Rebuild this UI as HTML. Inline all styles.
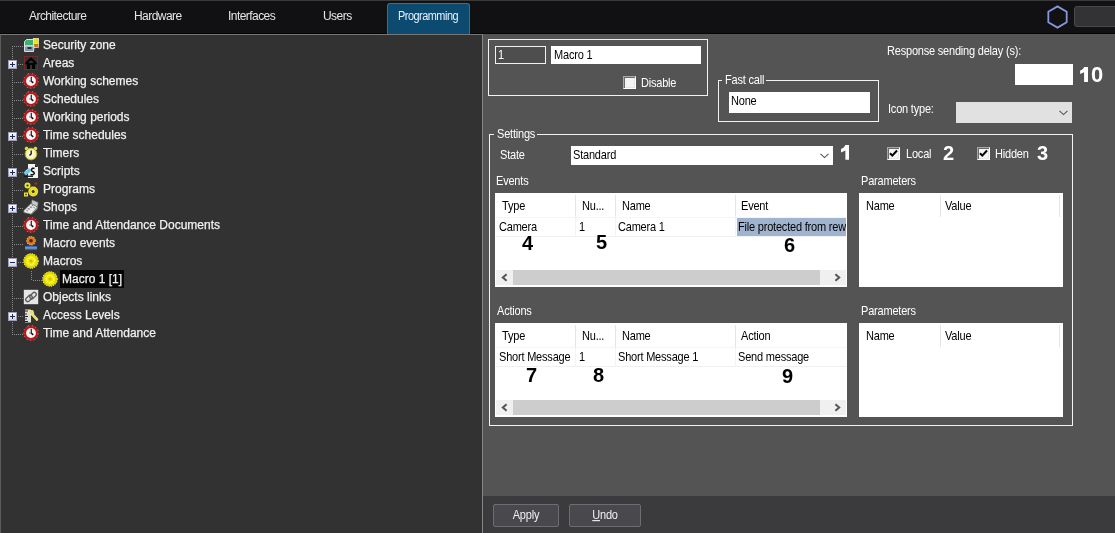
<!DOCTYPE html>
<html><head><meta charset="utf-8"><style>
*{margin:0;padding:0;box-sizing:border-box}
html,body{width:1115px;height:533px;overflow:hidden;background:#545454;font-family:"Liberation Sans",sans-serif;-webkit-font-smoothing:antialiased}
.a{position:absolute}
.t{position:absolute;white-space:nowrap;font-size:11px;line-height:13px;color:#fff;letter-spacing:-0.2px;transform:scaleY(1.1);transform-origin:0 10.3px}
.k{color:#000}
.tab{position:absolute;top:9px;font-size:12px;line-height:14px;color:#e6e6e6;letter-spacing:-0.55px;white-space:nowrap}
.tr{position:absolute;font-size:12px;line-height:18px;height:18px;color:#f0f0f0;white-space:nowrap;-webkit-text-stroke:0.25px #f0f0f0}
.num{position:absolute;font-size:20px;line-height:20px;font-weight:bold;white-space:nowrap}
.grp{position:absolute;border:1px solid #f2f2f2}
.gt{position:absolute;background:#545454;padding:0 2px;font-size:11px;line-height:13px;color:#fff;white-space:nowrap}
.fld{position:absolute;background:#fff}
.lv{position:absolute;background:#fff;overflow:hidden}
.chk{position:absolute;width:13px;height:13px;background:#f4f4f4;border:1px solid #a8a8a8;border-right-color:#fff;border-bottom-color:#fff;box-shadow:inset 1px 1px 0 #6c6c6c,inset -1px -1px 0 #e6e6e6}
svg{position:absolute;overflow:visible}
</style></head><body><div id="root" style="position:absolute;left:0;top:0;width:1115px;height:533px;will-change:transform">
<div class="a" style="left:0px;top:0px;width:1115px;height:34px;background:#111113;"></div>
<div class="a" style="left:0px;top:0px;width:1115px;height:1px;background:#3a3a3a;"></div>
<div class="a" style="left:0px;top:33px;width:1115px;height:1px;background:#050505;"></div>
<div class="tab" style="left:29px;top:9px;">Architecture</div>
<div class="tab" style="left:134px;top:9px;">Hardware</div>
<div class="tab" style="left:228px;top:9px;">Interfaces</div>
<div class="tab" style="left:323px;top:9px;">Users</div>
<div class="a" style="left:387px;top:3px;width:83px;height:32px;background:#0d4a70;border:1px solid #3b6f92;border-bottom:none;border-radius:3px 3px 0 0"></div>
<div class="tab" style="left:398px;top:9px;color:#e4f2ff;transform:scaleX(0.91);transform-origin:0 0">Programming</div>
<svg style="left:1045px;top:4px" width="26" height="27" viewBox="0 0 26 27"><polygon points="12.50,2.40 21.68,7.70 21.68,18.30 12.50,23.60 3.32,18.30 3.32,7.70" fill="none" stroke="#8597d8" stroke-width="1.8"/></svg>
<div class="a" style="left:1074px;top:6px;width:60px;height:21px;background:#333335;border:1px solid #4a4a4c;border-radius:3px"></div>
<div class="a" style="left:0px;top:34px;width:483px;height:499px;background:#323232;border-top:1px solid #777;border-left:1px solid #5c5c5c;border-right:1px solid #868686"></div>
<div class="a" style="left:12px;top:46px;width:1px;height:289px;background:repeating-linear-gradient(to bottom,#8c8c8c 0 1px,transparent 1px 2px)"></div>
<div class="a" style="left:13px;top:46px;width:10px;height:1px;background:repeating-linear-gradient(to right,transparent 0 1px,#8c8c8c 1px 2px)"></div>
<svg style="left:23px;top:37px" width="16" height="16" viewBox="0 0 16 16"><path d="M1.5 4.5L3.5 2.5H10.5V9H1.5Z" fill="#3cb070" stroke="#eaf6ea" stroke-width="0.9"/><rect x="10.5" y="1.5" width="5" height="5" fill="#ece020" stroke="#f8f4d0" stroke-width="0.7"/><rect x="10.5" y="6.5" width="5" height="4" fill="#c07c10" stroke="#f8e8c8" stroke-width="0.7"/><path d="M1.5 9H11L10.5 14.5H1.5Z" fill="#8a96aa" stroke="#e8ecf4" stroke-width="0.9"/><rect x="4.5" y="10" width="4" height="2" fill="#2a323c"/></svg>
<div class="tr" style="left:43px;top:36px">Security zone</div>
<div class="a" style="left:13px;top:64px;width:10px;height:1px;background:repeating-linear-gradient(to right,transparent 0 1px,#8c8c8c 1px 2px)"></div>
<svg style="left:23px;top:55px" width="16" height="16" viewBox="0 0 16 16"><rect x="1.5" y="1.5" width="13" height="13" fill="none" stroke="#c02020" stroke-width="1" stroke-dasharray="1 1"/><path d="M2.5 9L8 3.5L13.5 9" stroke="#000" stroke-width="2" fill="none"/><rect x="4" y="8" width="8" height="6" fill="#000"/><rect x="7" y="10" width="2" height="4" fill="#333"/></svg>
<div class="a" style="left:8px;top:60px;width:9px;height:9px;background:linear-gradient(#fafafa,#d8d8d8);border:1px solid #a0a0b0"></div>
<svg style="left:8px;top:60px" width="9" height="9" viewBox="0 0 9 9"><path d="M2 4.5H7" stroke="#1a2a5a" stroke-width="1"/><path d="M4.5 2V7" stroke="#1a2a5a" stroke-width="1"/></svg>
<div class="tr" style="left:43px;top:54px">Areas</div>
<div class="a" style="left:13px;top:82px;width:10px;height:1px;background:repeating-linear-gradient(to right,transparent 0 1px,#8c8c8c 1px 2px)"></div>
<svg style="left:23px;top:73px" width="16" height="16" viewBox="0 0 16 16"><path d="M5 0.8H11L15.2 5V11L11 15.2H5L0.8 11V5Z" fill="#b81818"/><path d="M5 0.8H11L15.2 5V11L11 15.2H5L0.8 11V5Z" fill="none" stroke="#f0b0a8" stroke-width="0.6" stroke-dasharray="1.2 2.6"/><circle cx="8" cy="8" r="4.9" fill="#fbf4f4"/><path d="M8.3 3.8V8.2" stroke="#3a2060" stroke-width="1.3"/><path d="M8.2 8.2L10.3 9.8" stroke="#111" stroke-width="1.5"/><path d="M6 8H8" stroke="#777" stroke-width="1"/></svg>
<div class="tr" style="left:43px;top:72px">Working schemes</div>
<div class="a" style="left:13px;top:100px;width:10px;height:1px;background:repeating-linear-gradient(to right,transparent 0 1px,#8c8c8c 1px 2px)"></div>
<svg style="left:23px;top:91px" width="16" height="16" viewBox="0 0 16 16"><path d="M5 0.8H11L15.2 5V11L11 15.2H5L0.8 11V5Z" fill="#b81818"/><path d="M5 0.8H11L15.2 5V11L11 15.2H5L0.8 11V5Z" fill="none" stroke="#f0b0a8" stroke-width="0.6" stroke-dasharray="1.2 2.6"/><circle cx="8" cy="8" r="4.9" fill="#fbf4f4"/><path d="M8.3 3.8V8.2" stroke="#3a2060" stroke-width="1.3"/><path d="M8.2 8.2L10.3 9.8" stroke="#111" stroke-width="1.5"/><path d="M6 8H8" stroke="#777" stroke-width="1"/></svg>
<div class="tr" style="left:43px;top:90px">Schedules</div>
<div class="a" style="left:13px;top:118px;width:10px;height:1px;background:repeating-linear-gradient(to right,transparent 0 1px,#8c8c8c 1px 2px)"></div>
<svg style="left:23px;top:109px" width="16" height="16" viewBox="0 0 16 16"><path d="M5 0.8H11L15.2 5V11L11 15.2H5L0.8 11V5Z" fill="#b81818"/><path d="M5 0.8H11L15.2 5V11L11 15.2H5L0.8 11V5Z" fill="none" stroke="#f0b0a8" stroke-width="0.6" stroke-dasharray="1.2 2.6"/><circle cx="8" cy="8" r="4.9" fill="#fbf4f4"/><path d="M8.3 3.8V8.2" stroke="#3a2060" stroke-width="1.3"/><path d="M8.2 8.2L10.3 9.8" stroke="#111" stroke-width="1.5"/><path d="M6 8H8" stroke="#777" stroke-width="1"/></svg>
<div class="tr" style="left:43px;top:108px">Working periods</div>
<div class="a" style="left:13px;top:136px;width:10px;height:1px;background:repeating-linear-gradient(to right,transparent 0 1px,#8c8c8c 1px 2px)"></div>
<svg style="left:23px;top:127px" width="16" height="16" viewBox="0 0 16 16"><path d="M5 0.8H11L15.2 5V11L11 15.2H5L0.8 11V5Z" fill="#b81818"/><path d="M5 0.8H11L15.2 5V11L11 15.2H5L0.8 11V5Z" fill="none" stroke="#f0b0a8" stroke-width="0.6" stroke-dasharray="1.2 2.6"/><circle cx="8" cy="8" r="4.9" fill="#fbf4f4"/><path d="M8.3 3.8V8.2" stroke="#3a2060" stroke-width="1.3"/><path d="M8.2 8.2L10.3 9.8" stroke="#111" stroke-width="1.5"/><path d="M6 8H8" stroke="#777" stroke-width="1"/></svg>
<div class="a" style="left:8px;top:132px;width:9px;height:9px;background:linear-gradient(#fafafa,#d8d8d8);border:1px solid #a0a0b0"></div>
<svg style="left:8px;top:132px" width="9" height="9" viewBox="0 0 9 9"><path d="M2 4.5H7" stroke="#1a2a5a" stroke-width="1"/><path d="M4.5 2V7" stroke="#1a2a5a" stroke-width="1"/></svg>
<div class="tr" style="left:43px;top:126px">Time schedules</div>
<div class="a" style="left:13px;top:154px;width:10px;height:1px;background:repeating-linear-gradient(to right,transparent 0 1px,#8c8c8c 1px 2px)"></div>
<svg style="left:23px;top:145px" width="16" height="16" viewBox="0 0 16 16"><circle cx="3.6" cy="3.6" r="2.3" fill="#e2dc50" stroke="#222" stroke-width="0.8"/><circle cx="12.4" cy="3.6" r="2.3" fill="#e2dc50" stroke="#222" stroke-width="0.8"/><circle cx="8" cy="9" r="5.9" fill="#f2f09a" stroke="#b0a830" stroke-width="0.9"/><circle cx="8" cy="9" r="3.8" fill="#fafad0"/><path d="M8.2 5.5V9L6.4 10.6" stroke="#111" stroke-width="1.3" fill="none"/></svg>
<div class="tr" style="left:43px;top:144px">Timers</div>
<div class="a" style="left:13px;top:172px;width:10px;height:1px;background:repeating-linear-gradient(to right,transparent 0 1px,#8c8c8c 1px 2px)"></div>
<svg style="left:23px;top:163px" width="16" height="16" viewBox="0 0 16 16"><path d="M5 1H12L15 4V15H5Z" fill="#f2f2f2"/><path d="M12 1V4H15Z" fill="#1a1a1a"/><path d="M0.5 10L6 5L8.5 7.5L3 12.5Z" fill="#6cc8ec"/><path d="M1.5 9L5.5 5.5" stroke="#d8f4ff" stroke-width="0.8"/><path d="M1 13.3H10" stroke="#1a1a1a" stroke-width="1.3"/><path d="M11.5 5.5C8.5 4 7.5 8 10 8.8C12.5 9.6 11 12.5 7.5 11.5" stroke="#111" stroke-width="1.5" fill="none"/></svg>
<div class="a" style="left:8px;top:168px;width:9px;height:9px;background:linear-gradient(#fafafa,#d8d8d8);border:1px solid #a0a0b0"></div>
<svg style="left:8px;top:168px" width="9" height="9" viewBox="0 0 9 9"><path d="M2 4.5H7" stroke="#1a2a5a" stroke-width="1"/><path d="M4.5 2V7" stroke="#1a2a5a" stroke-width="1"/></svg>
<div class="tr" style="left:43px;top:162px">Scripts</div>
<div class="a" style="left:13px;top:190px;width:10px;height:1px;background:repeating-linear-gradient(to right,transparent 0 1px,#8c8c8c 1px 2px)"></div>
<svg style="left:23px;top:181px" width="16" height="16" viewBox="0 0 16 16"><circle cx="4.5" cy="4.5" r="3" fill="#f0e430"/><circle cx="4.5" cy="4.5" r="1.1" fill="#3a3000"/><circle cx="10.2" cy="10.5" r="4.9" fill="#f0e430"/><circle cx="10.2" cy="10.5" r="3.3" fill="none" stroke="#d8cc10" stroke-width="0.8"/><circle cx="10.2" cy="10.5" r="1.5" fill="#3a3000"/><rect x="1" y="11.5" width="4" height="4" fill="#f0e430"/><rect x="2.3" y="12.8" width="1.4" height="1.4" fill="#3a3000"/><circle cx="12.8" cy="2.5" r="1.3" fill="#c82020"/></svg>
<div class="tr" style="left:43px;top:180px">Programs</div>
<div class="a" style="left:13px;top:208px;width:10px;height:1px;background:repeating-linear-gradient(to right,transparent 0 1px,#8c8c8c 1px 2px)"></div>
<svg style="left:23px;top:199px" width="16" height="16" viewBox="0 0 16 16"><path d="M9 0.8L15.2 3.5L14.5 8L8.5 5Z" fill="#c8c8c8" stroke="#707070" stroke-width="0.6"/><path d="M0.8 11.5L8 4.5L14.5 8L8 15.2L0.8 13.5Z" fill="#ececec" stroke="#666" stroke-width="0.7"/><path d="M8 15.2L14.5 8V10L8.5 15.5Z" fill="#999"/><path d="M4.6 9.6L6.2 10.4M6.6 7.8L8.2 8.6M8.6 6.2L10.2 7M3.4 11.3L5 12.1M5.5 9.5L7.1 10.3M7.5 7.7L9.1 8.5M10.3 8.2L11.9 9" stroke="#808080" stroke-width="1"/></svg>
<div class="a" style="left:8px;top:204px;width:9px;height:9px;background:linear-gradient(#fafafa,#d8d8d8);border:1px solid #a0a0b0"></div>
<svg style="left:8px;top:204px" width="9" height="9" viewBox="0 0 9 9"><path d="M2 4.5H7" stroke="#1a2a5a" stroke-width="1"/><path d="M4.5 2V7" stroke="#1a2a5a" stroke-width="1"/></svg>
<div class="tr" style="left:43px;top:198px">Shops</div>
<div class="a" style="left:13px;top:226px;width:10px;height:1px;background:repeating-linear-gradient(to right,transparent 0 1px,#8c8c8c 1px 2px)"></div>
<svg style="left:23px;top:217px" width="16" height="16" viewBox="0 0 16 16"><path d="M5 0.8H11L15.2 5V11L11 15.2H5L0.8 11V5Z" fill="#b81818"/><path d="M5 0.8H11L15.2 5V11L11 15.2H5L0.8 11V5Z" fill="none" stroke="#f0b0a8" stroke-width="0.6" stroke-dasharray="1.2 2.6"/><circle cx="8" cy="8" r="4.9" fill="#fbf4f4"/><path d="M8.3 3.8V8.2" stroke="#3a2060" stroke-width="1.3"/><path d="M8.2 8.2L10.3 9.8" stroke="#111" stroke-width="1.5"/><path d="M6 8H8" stroke="#777" stroke-width="1"/></svg>
<div class="tr" style="left:43px;top:216px">Time and Attendance Documents</div>
<div class="a" style="left:13px;top:244px;width:10px;height:1px;background:repeating-linear-gradient(to right,transparent 0 1px,#8c8c8c 1px 2px)"></div>
<svg style="left:23px;top:235px" width="16" height="16" viewBox="0 0 16 16"><circle cx="8" cy="5.8" r="4.2" fill="#e07818" stroke="#f0a040" stroke-width="1.3" stroke-dasharray="1.4 1"/><circle cx="8" cy="5.8" r="1.8" fill="#4a2800"/><rect x="2" y="11" width="12" height="1.6" fill="#2f6cc8"/><rect x="2" y="12.6" width="12" height="1" fill="#e8f0ff"/><rect x="2" y="13.6" width="12" height="1.6" fill="#2a5cb0"/></svg>
<div class="tr" style="left:43px;top:234px">Macro events</div>
<div class="a" style="left:13px;top:262px;width:10px;height:1px;background:repeating-linear-gradient(to right,transparent 0 1px,#8c8c8c 1px 2px)"></div>
<svg style="left:23px;top:253px" width="16" height="16" viewBox="0 0 16 16"><circle cx="8" cy="8" r="7.2" fill="#d8d000" stroke="#f0ea30" stroke-width="1.2" stroke-dasharray="1.3 1"/><circle cx="8" cy="8" r="5.6" fill="#f2ea00"/><circle cx="8" cy="8" r="3.6" fill="none" stroke="#fffde0" stroke-width="0.9" stroke-dasharray="1 0.9"/><circle cx="8" cy="8" r="1.6" fill="#c8c000"/></svg>
<div class="a" style="left:8px;top:258px;width:9px;height:9px;background:linear-gradient(#fafafa,#d8d8d8);border:1px solid #a0a0b0"></div>
<svg style="left:8px;top:258px" width="9" height="9" viewBox="0 0 9 9"><path d="M2 4.5H7" stroke="#1a2a5a" stroke-width="1"/></svg>
<div class="tr" style="left:43px;top:252px">Macros</div>
<div class="a" style="left:31px;top:271px;width:1px;height:9px;background:repeating-linear-gradient(to bottom,#8c8c8c 0 1px,transparent 1px 2px)"></div>
<div class="a" style="left:32px;top:280px;width:10px;height:1px;background:repeating-linear-gradient(to right,transparent 0 1px,#8c8c8c 1px 2px)"></div>
<div class="a" style="left:60px;top:270px;width:64px;height:18px;background:#050505;"></div>
<svg style="left:42px;top:271px" width="16" height="16" viewBox="0 0 16 16"><circle cx="8" cy="8" r="7.2" fill="#d8d000" stroke="#f0ea30" stroke-width="1.2" stroke-dasharray="1.3 1"/><circle cx="8" cy="8" r="5.6" fill="#f2ea00"/><circle cx="8" cy="8" r="3.6" fill="none" stroke="#fffde0" stroke-width="0.9" stroke-dasharray="1 0.9"/><circle cx="8" cy="8" r="1.6" fill="#c8c000"/></svg>
<div class="tr" style="left:62px;top:270px">Macro 1 [1]</div>
<div class="a" style="left:13px;top:298px;width:10px;height:1px;background:repeating-linear-gradient(to right,transparent 0 1px,#8c8c8c 1px 2px)"></div>
<svg style="left:23px;top:289px" width="16" height="16" viewBox="0 0 16 16"><rect x="0.8" y="0.8" width="14.4" height="14.4" fill="#e6e6e6"/><rect x="2.2" y="7.3" width="7.5" height="4" rx="2" transform="rotate(-45 6 9.3)" fill="none" stroke="#606060" stroke-width="1.4"/><rect x="6.3" y="4.7" width="7.5" height="4" rx="2" transform="rotate(-45 10 6.7)" fill="none" stroke="#606060" stroke-width="1.4"/></svg>
<div class="tr" style="left:43px;top:288px">Objects links</div>
<div class="a" style="left:13px;top:316px;width:10px;height:1px;background:repeating-linear-gradient(to right,transparent 0 1px,#8c8c8c 1px 2px)"></div>
<svg style="left:23px;top:307px" width="16" height="16" viewBox="0 0 16 16"><rect x="2" y="2.5" width="6" height="13" fill="#e0e0e0"/><path d="M2 4H5M2 7H4M2 9.5H5M2 12H4M2 14.5H5" stroke="#222" stroke-width="1"/><path d="M8.5 6.5L14 12.5" stroke="#e8e070" stroke-width="2.6" stroke-linecap="round"/><path d="M5 3.5H10L11 6.5L8 8Z" fill="#e8e070" stroke="#f8f4b0" stroke-width="0.6"/></svg>
<div class="a" style="left:8px;top:312px;width:9px;height:9px;background:linear-gradient(#fafafa,#d8d8d8);border:1px solid #a0a0b0"></div>
<svg style="left:8px;top:312px" width="9" height="9" viewBox="0 0 9 9"><path d="M2 4.5H7" stroke="#1a2a5a" stroke-width="1"/><path d="M4.5 2V7" stroke="#1a2a5a" stroke-width="1"/></svg>
<div class="tr" style="left:43px;top:306px">Access Levels</div>
<div class="a" style="left:13px;top:334px;width:10px;height:1px;background:repeating-linear-gradient(to right,transparent 0 1px,#8c8c8c 1px 2px)"></div>
<svg style="left:23px;top:325px" width="16" height="16" viewBox="0 0 16 16"><path d="M5 0.8H11L15.2 5V11L11 15.2H5L0.8 11V5Z" fill="#b81818"/><path d="M5 0.8H11L15.2 5V11L11 15.2H5L0.8 11V5Z" fill="none" stroke="#f0b0a8" stroke-width="0.6" stroke-dasharray="1.2 2.6"/><circle cx="8" cy="8" r="4.9" fill="#fbf4f4"/><path d="M8.3 3.8V8.2" stroke="#3a2060" stroke-width="1.3"/><path d="M8.2 8.2L10.3 9.8" stroke="#111" stroke-width="1.5"/><path d="M6 8H8" stroke="#777" stroke-width="1"/></svg>
<div class="tr" style="left:43px;top:324px">Time and Attendance</div>
<div class="a" style="left:483px;top:496px;width:632px;height:37px;background:#3b3a3c;"></div>
<div class="a" style="left:488px;top:39px;width:220px;height:57px;border:1px solid #f2f2f2"></div>
<div class="a" style="left:495px;top:46px;width:51px;height:18px;border:1px solid #f2f2f2"></div>
<div class="a" style="left:496px;top:47px;width:49px;height:16px;background:#4e4e4e;"></div>
<div class="t" style="left:498px;top:49px;color:#fff;">1</div>
<div class="a" style="left:551px;top:46px;width:150px;height:18px;background:#fff;"></div>
<div class="t" style="left:554px;top:49px;color:#000;">Macro 1</div>
<div class="chk" style="left:623px;top:76px"></div>
<div class="t" style="left:641px;top:77px;color:#fff;">Disable</div>
<div class="a" style="left:718px;top:80px;width:161px;height:42px;border:1px solid #f2f2f2"></div>
<div class="a" style="left:722px;top:74px;width:44px;height:12px;background:#545454;"></div>
<div class="t" style="left:725px;top:74px;color:#fff;">Fast call</div>
<div class="a" style="left:729px;top:92px;width:141px;height:21px;background:#fff;"></div>
<div class="t" style="left:731px;top:95px;color:#000;">None</div>
<div class="t" style="left:887px;top:45px;color:#fff;">Response sending delay (s):</div>
<div class="a" style="left:1015px;top:64px;width:58px;height:21px;background:#fff;"></div>
<svg style="left:1076px;top:60px" width="30" height="26" viewBox="1076 60 30 26"><path d="M1084.1 66.9H1088V82H1084.1V72.3L1080.1 74.1V70.6C1082.3 69.7 1083.5 68.5 1084.1 66.9Z" fill="#fff"/></svg>
<div class="num" style="left:1091px;top:64px;font-size:22px;line-height:22px;color:#fff">0</div>
<div class="t" style="left:888px;top:103px;color:#fff;">Icon type:</div>
<div class="a" style="left:956px;top:102px;width:116px;height:21px;background:#e1e1e1;"></div>
<svg style="left:1059px;top:110px" width="9" height="6" viewBox="0 0 9 6"><path d="M0.5 0.8L4.5 4.6L8.5 0.8" stroke="#555" stroke-width="1.1" fill="none"/></svg>
<div class="a" style="left:489px;top:134px;width:584px;height:292px;border:1px solid #f2f2f2"></div>
<div class="a" style="left:494px;top:128px;width:43px;height:12px;background:#545454;"></div>
<div class="t" style="left:497px;top:128px;color:#fff;">Settings</div>
<div class="t" style="left:500px;top:149px;color:#fff;">State</div>
<div class="a" style="left:571px;top:146px;width:262px;height:19px;background:#fff;"></div>
<div class="t" style="left:573px;top:149px;color:#000;">Standard</div>
<svg style="left:820px;top:153px" width="9" height="6" viewBox="0 0 9 6"><path d="M0.5 0.8L4.5 4.6L8.5 0.8" stroke="#555" stroke-width="1.1" fill="none"/></svg>
<svg style="left:836px;top:140px" width="20" height="24" viewBox="836 140 20 24"><path d="M845.4 145H849V159.8H845.4V150.6L841 152.4V149.1C843.2 148.2 844.7 146.8 845.4 145Z" fill="#fff"/></svg>
<div class="chk" style="left:887px;top:147px"></div>
<svg style="left:888px;top:148px" width="11" height="11" viewBox="0 0 11 11"><path d="M2 5.2L4.3 7.6L9 2.5" stroke="#000" stroke-width="2" fill="none"/></svg>
<div class="t" style="left:906px;top:148px;color:#fff;">Local</div>
<div class="num" style="left:943px;top:143px;color:#fff">2</div>
<div class="chk" style="left:977px;top:147px"></div>
<svg style="left:978px;top:148px" width="11" height="11" viewBox="0 0 11 11"><path d="M2 5.2L4.3 7.6L9 2.5" stroke="#000" stroke-width="2" fill="none"/></svg>
<div class="t" style="left:995px;top:148px;color:#fff;">Hidden</div>
<div class="num" style="left:1037px;top:143px;color:#fff">3</div>
<div class="t" style="left:496px;top:175px;color:#fff;">Events</div>
<div class="t" style="left:861px;top:175px;color:#fff;">Parameters</div>
<div class="a" style="left:495px;top:193px;width:352px;height:94px;background:#fff;"></div>
<div class="a" style="left:575px;top:195px;width:1px;height:22px;background:#e5e5e5;"></div>
<div class="a" style="left:615px;top:195px;width:1px;height:22px;background:#e5e5e5;"></div>
<div class="a" style="left:735px;top:195px;width:1px;height:22px;background:#e5e5e5;"></div>
<div class="t" style="left:502px;top:200px;color:#000;">Type</div>
<div class="t" style="left:582px;top:200px;color:#000;">Nu...</div>
<div class="t" style="left:622px;top:200px;color:#000;">Name</div>
<div class="t" style="left:741px;top:200px;color:#000;">Event</div>
<div class="a" style="left:496px;top:217px;width:350px;height:1px;background:#f5f5f5;"></div>
<div class="a" style="left:496px;top:236px;width:350px;height:1px;background:#f0f0f0;"></div>
<div class="a" style="left:575px;top:217px;width:1px;height:20px;background:#f3f3f3;"></div>
<div class="a" style="left:615px;top:217px;width:1px;height:20px;background:#f3f3f3;"></div>
<div class="a" style="left:735px;top:217px;width:1px;height:20px;background:#f3f3f3;"></div>
<div class="a" style="left:737px;top:218px;width:109px;height:18px;background:#a0b4d0;"></div>
<div class="a" style="left:499px;top:221px;width:347px;height:14px;overflow:hidden"><div class="t" style="left:0;top:0;color:#000">Camera</div></div>
<div class="a" style="left:579px;top:221px;width:267px;height:14px;overflow:hidden"><div class="t" style="left:0;top:0;color:#000">1</div></div>
<div class="a" style="left:618px;top:221px;width:228px;height:14px;overflow:hidden"><div class="t" style="left:0;top:0;color:#000">Camera 1</div></div>
<div class="a" style="left:738px;top:221px;width:108px;height:14px;overflow:hidden"><div class="t" style="left:0;top:0;color:#000">File protected from rew</div></div>
<div class="a" style="left:496px;top:270px;width:350px;height:15px;background:#f0f0f0;"></div>
<div class="a" style="left:513px;top:270px;width:307px;height:15px;background:#cdcdcd;"></div>
<svg style="left:500px;top:273px" width="9" height="9" viewBox="0 0 9 9"><path d="M6.6 1.2L2.8 4.5L6.6 7.8" stroke="#555" stroke-width="2" fill="none"/></svg>
<svg style="left:833px;top:273px" width="9" height="9" viewBox="0 0 9 9"><path d="M2.4 1.2L6.2 4.5L2.4 7.8" stroke="#555" stroke-width="2" fill="none"/></svg>
<div class="a" style="left:859px;top:193px;width:204px;height:94px;background:#fff;"></div>
<div class="a" style="left:940px;top:195px;width:1px;height:22px;background:#e5e5e5;"></div>
<div class="a" style="left:1059px;top:195px;width:1px;height:22px;background:#e5e5e5;"></div>
<div class="t" style="left:866px;top:200px;color:#000;">Name</div>
<div class="t" style="left:945px;top:200px;color:#000;">Value</div>
<div class="num" style="left:522px;top:233px;color:#000">4</div>
<div class="num" style="left:596px;top:232px;color:#000">5</div>
<div class="num" style="left:784px;top:235px;color:#000">6</div>
<div class="t" style="left:497px;top:305px;color:#fff;">Actions</div>
<div class="t" style="left:861px;top:305px;color:#fff;">Parameters</div>
<div class="a" style="left:495px;top:323px;width:352px;height:94px;background:#fff;"></div>
<div class="a" style="left:575px;top:325px;width:1px;height:22px;background:#e5e5e5;"></div>
<div class="a" style="left:615px;top:325px;width:1px;height:22px;background:#e5e5e5;"></div>
<div class="a" style="left:735px;top:325px;width:1px;height:22px;background:#e5e5e5;"></div>
<div class="t" style="left:502px;top:330px;color:#000;">Type</div>
<div class="t" style="left:582px;top:330px;color:#000;">Nu...</div>
<div class="t" style="left:622px;top:330px;color:#000;">Name</div>
<div class="t" style="left:741px;top:330px;color:#000;">Action</div>
<div class="a" style="left:496px;top:347px;width:350px;height:1px;background:#f5f5f5;"></div>
<div class="a" style="left:496px;top:366px;width:350px;height:1px;background:#f0f0f0;"></div>
<div class="a" style="left:575px;top:347px;width:1px;height:20px;background:#f3f3f3;"></div>
<div class="a" style="left:615px;top:347px;width:1px;height:20px;background:#f3f3f3;"></div>
<div class="a" style="left:735px;top:347px;width:1px;height:20px;background:#f3f3f3;"></div>
<div class="a" style="left:499px;top:351px;width:347px;height:14px;overflow:hidden"><div class="t" style="left:0;top:0;color:#000">Short Message</div></div>
<div class="a" style="left:579px;top:351px;width:267px;height:14px;overflow:hidden"><div class="t" style="left:0;top:0;color:#000">1</div></div>
<div class="a" style="left:618px;top:351px;width:228px;height:14px;overflow:hidden"><div class="t" style="left:0;top:0;color:#000">Short Message 1</div></div>
<div class="a" style="left:738px;top:351px;width:108px;height:14px;overflow:hidden"><div class="t" style="left:0;top:0;color:#000">Send message</div></div>
<div class="a" style="left:496px;top:400px;width:350px;height:15px;background:#f0f0f0;"></div>
<div class="a" style="left:513px;top:400px;width:307px;height:15px;background:#cdcdcd;"></div>
<svg style="left:500px;top:403px" width="9" height="9" viewBox="0 0 9 9"><path d="M6.6 1.2L2.8 4.5L6.6 7.8" stroke="#555" stroke-width="2" fill="none"/></svg>
<svg style="left:833px;top:403px" width="9" height="9" viewBox="0 0 9 9"><path d="M2.4 1.2L6.2 4.5L2.4 7.8" stroke="#555" stroke-width="2" fill="none"/></svg>
<div class="a" style="left:859px;top:323px;width:204px;height:94px;background:#fff;"></div>
<div class="a" style="left:940px;top:325px;width:1px;height:22px;background:#e5e5e5;"></div>
<div class="a" style="left:1059px;top:325px;width:1px;height:22px;background:#e5e5e5;"></div>
<div class="t" style="left:866px;top:330px;color:#000;">Name</div>
<div class="t" style="left:945px;top:330px;color:#000;">Value</div>
<div class="num" style="left:526px;top:365px;color:#000">7</div>
<div class="num" style="left:593px;top:365px;color:#000">8</div>
<div class="num" style="left:782px;top:366px;color:#000">9</div>
<div class="a" style="left:493px;top:504px;width:66px;height:23px;background:#49484c;border:1px solid #6e6e72;border-radius:2px"></div>
<div class="t" style="left:493px;top:509px;width:66px;text-align:center;color:#f0f0f0">Apply</div>
<div class="a" style="left:569px;top:504px;width:72px;height:23px;background:#49484c;border:1px solid #6e6e72;border-radius:2px"></div>
<div class="t" style="left:569px;top:509px;width:72px;text-align:center;color:#f0f0f0"><u>U</u>ndo</div>
</div></body></html>
